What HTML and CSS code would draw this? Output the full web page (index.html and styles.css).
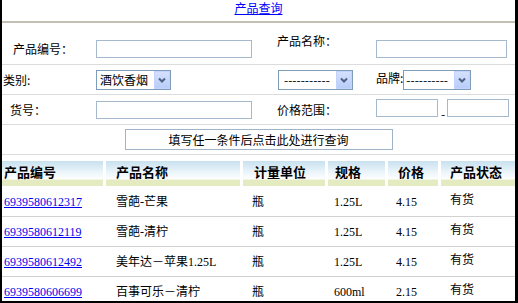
FILE: index.html
```html
<!DOCTYPE html>
<html>
<head>
<meta charset="UTF-8">
<title>产品查询</title>
<link rel="stylesheet" href="styles.css">
</head>
<body>
<div class="frame">
  <div class="title"><a href="#">产品查询</a></div>

  <div class="search">
    <div class="row row-top">
      <span class="label l-code">产品编号：</span>
      <span><input class="text" type="text"></span>
      <span class="label l-name">产品名称：</span>
      <span><input class="text text-r" type="text"></span>
    </div>

    <div class="row">
      <span class="label l-type">类别:</span>
      <span>
        <span class="pick">酒饮香烟<span class="arrow"><svg width="14" height="16" viewBox="0 0 14 16"><path d="M4 6.5 L7 9.5 L10 6.5" fill="none" stroke="#4d6185" stroke-width="2"/></svg></span></span>
      </span>
      <span>
        <span class="pick pick-sub">-----------<span class="arrow"><svg width="14" height="16" viewBox="0 0 14 16"><path d="M4 6.5 L7 9.5 L10 6.5" fill="none" stroke="#4d6185" stroke-width="2"/></svg></span></span>
      </span>
      <span class="brand">
        品牌:<span class="pick pick-brand">----------<span class="arrow"><svg width="14" height="16" viewBox="0 0 14 16"><path d="M4 6.5 L7 9.5 L10 6.5" fill="none" stroke="#4d6185" stroke-width="2"/></svg></span></span>
      </span>
    </div>

    <div class="row">
      <span class="label l-no">货号：</span>
      <span><input class="text" type="text"></span>
      <span class="label">价格范围：</span>
      <span class="price">
        <input class="text text-s" type="text"><span class="dash">-</span><input class="text text-s" type="text">
      </span>
    </div>

    <div class="row row-btn">
      <button class="go" type="button">填写任一条件后点击此处进行查询</button>
    </div>
  </div>

  <table class="list">
    <thead>
      <tr>
        <th>产品编号</th>
        <th>产品名称</th>
        <th>计量单位</th>
        <th>规格</th>
        <th>价格</th>
        <th>产品状态</th>
      </tr>
    </thead>
    <tbody>
      <tr>
        <td><a href="#">6939580612317</a></td>
        <td>雪葩-芒果</td>
        <td>瓶</td>
        <td>1.25L</td>
        <td>4.15</td>
        <td class="state">有货</td>
      </tr>
      <tr>
        <td><a href="#">6939580612119</a></td>
        <td>雪葩-清柠</td>
        <td>瓶</td>
        <td>1.25L</td>
        <td>4.15</td>
        <td class="state">有货</td>
      </tr>
      <tr>
        <td><a href="#">6939580612492</a></td>
        <td>美年达－苹果1.25L</td>
        <td>瓶</td>
        <td>1.25L</td>
        <td>4.15</td>
        <td class="state">有货</td>
      </tr>
      <tr>
        <td><a href="#">6939580606699</a></td>
        <td>百事可乐－清柠</td>
        <td>瓶</td>
        <td>600ml</td>
        <td>2.15</td>
        <td class="state">有货</td>
      </tr>
    </tbody>
  </table>
</div>
</body>
</html>
```

FILE: styles.css
```css
* {
	margin: 0;
	padding: 0;
	box-sizing: border-box;
}

body {
	width: 518px;
	height: 303px;
	overflow: hidden;
	background: #fff;
	color: #000;
	font-family: "Noto Sans CJK SC", sans-serif;
	font-size: 12px;
	line-height: 14px;
}

a {
	color: #0000ee;
}

.frame {
	height: 303px;
	border-left: 2px solid #000;
	border-right: 3px solid #000;
	border-bottom: 2px solid #000;
	overflow: hidden;
}

.title {
	height: 23px;
	line-height: 16px;
	text-align: center;
	border-bottom: 2px solid #c4c0b4;
}

.title a {
	color: #0000ff;
}

/* search form */
.row {
	display: grid;
	grid-template-columns: 94px 181px 99px 1fr;
	align-items: center;
	height: 30px;
	border-bottom: 1px solid #dcdcdc;
}

.row-top {
	height: 42px;
	align-items: start;
}

.row-top .l-code {
	padding-top: 19px;
	padding-left: 11px;
}

.row-top .l-name {
	padding-top: 11px;
}

.row-top input {
	margin-top: 17px;
}

.l-type {
	padding-left: 1px;
}

.l-no {
	padding-left: 8px;
}

.text {
	display: block;
	width: 156px;
	height: 18px;
	border: 1px solid #a5b9cc;
	background: #fff;
}

.text-r {
	width: 131px;
}

.text-s {
	width: 62px;
}

.price {
	display: flex;
	align-items: flex-start;
}

.dash {
	margin: 8px 2px 0 3px;
}

.pick {
	display: inline-flex;
	align-items: center;
	justify-content: space-between;
	width: 75px;
	height: 20px;
	padding-left: 3px;
	border: 1px solid #7f9db9;
	background: #fff;
	vertical-align: middle;
}

.pick-sub {
	margin-left: 1px;
	padding-left: 5px;
}

.pick-brand {
	width: 68px;
	padding-left: 2px;
}

.arrow {
	display: flex;
	align-items: center;
	justify-content: center;
	width: 16px;
	height: 18px;
	background: linear-gradient(#d4e0fd, #b9cdf8);
	border: 1px solid #c3d3fd;
}

.brand {
	white-space: nowrap;
}

.row-btn {
	display: flex;
	justify-content: center;
}

.go {
	width: 268px;
	height: 21px;
	border: 1px solid #a0b4c8;
	background: #fff;
	font-family: "Noto Sans CJK SC", sans-serif;
	font-size: 12px;
	line-height: 14px;
	color: #000;
}

/* result list */
.list {
	width: 100%;
	margin-top: 6px;
	border-collapse: separate;
	border-spacing: 0;
	table-layout: fixed;
}

.list th {
	height: 26px;
	padding: 2px 0 7px;
	text-align: left;
	font-size: 13px;
	font-weight: bold;
	border-right: 3px solid #fff;
	background: linear-gradient(to bottom, #c8e1ef 0, #eef6fb 12px, #fdfeff 18px, #e5ebc0 19px, #e5ebc0 25px, #fff 25px);
}

.list th:last-child {
	border-right: 0;
}

.list td {
	height: 30px;
	border-bottom: 1px solid #d2d2d2;
	font-family: "Liberation Serif", "Noto Sans CJK SC", serif;
	font-size: 12px;
	white-space: nowrap;
}

.list td.state {
	padding-bottom: 3px;
}

.list th:nth-child(1), .list td:nth-child(1) { width: 104px; padding-left: 2px; }
.list th:nth-child(2), .list td:nth-child(2) { width: 137px; padding-left: 10px; }
.list th:nth-child(3) { width: 85px; padding-left: 11px; }
.list td:nth-child(3) { padding-left: 9px; }
.list th:nth-child(4) { width: 60px; padding-left: 7px; }
.list td:nth-child(4) { padding-left: 6px; }
.list th:nth-child(5) { width: 53px; padding-left: 10px; }
.list td:nth-child(5) { padding-left: 8px; }
.list th:nth-child(6), .list td:nth-child(6) { padding-left: 9px; }
```
